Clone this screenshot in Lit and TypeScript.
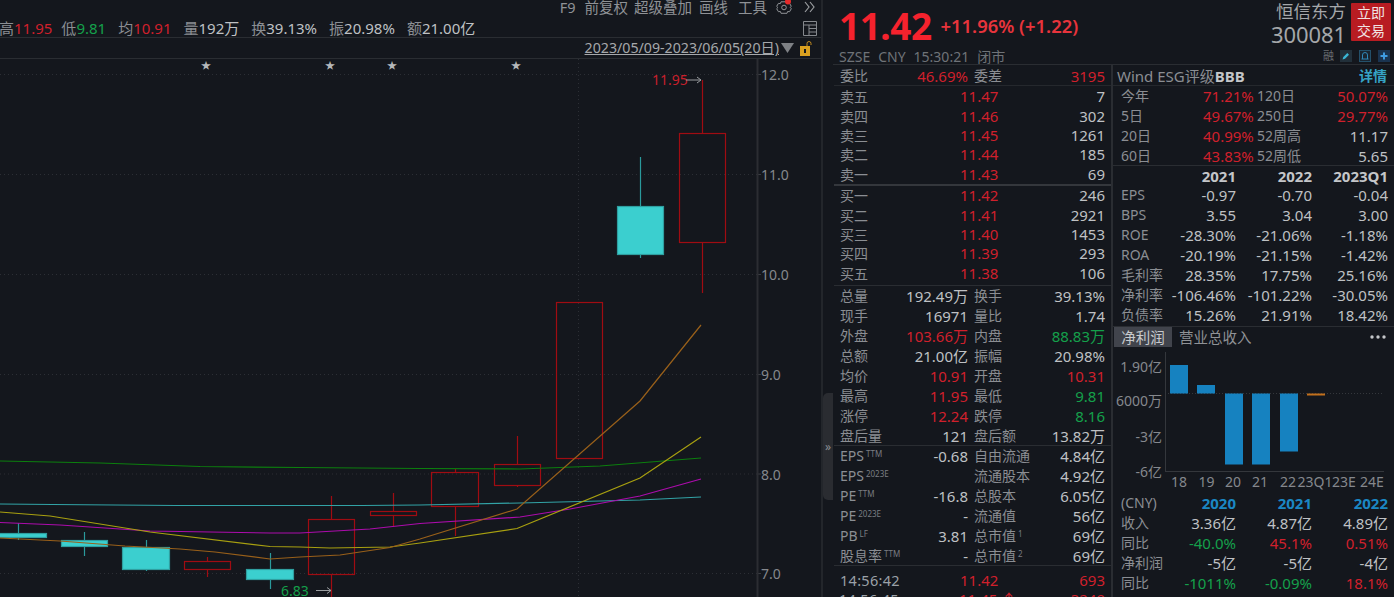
import { LitElement, html, css, svg } from "lit";
import { customElement } from "lit/decorators.js";

type C = "w" | "r" | "g" | "b";
const cls = (c: C) => ({ w: "w", r: "r", g: "g", b: "b" }[c]);

const candles: [number, number, number, number, number, number, number][] = [
  // kind(0 teal,1 red), x0, x1, top, bottom, wickTop, wickBottom
  [0, -10, 46, 533, 537, 523, 540],
  [0, 61, 107, 540, 546, 532, 556],
  [0, 122, 169, 547, 569, 540, 571],
  [1, 184, 230, 561, 569, 557, 577],
  [0, 246, 293, 569, 579, 553, 589],
  [1, 308, 354, 519, 574, 496, 597],
  [1, 370, 416, 511, 515, 493, 527],
  [1, 431, 478, 472, 506, 469, 536],
  [1, 494, 540, 464, 485, 436, 487],
  [1, 556, 602, 302, 458, 302, 458],
  [0, 617, 663, 206, 254, 157, 258],
  [1, 679, 725, 133, 242, 80, 293],
];

const lines: [string, string][] = [
  ["#0c7f0e", "0,461 100,463 200,466.5 300,467.5 420,468.5 520,469 600,466 701,458"],
  ["#32a3a6", "0,504 53,504.5 176,505.5 362,505.5 420,505 520,503 640,500 701,497"],
  ["#ac0cac", "0,522.5 60,525 150,531 270,533 300,533 370,529 420,523.5 520,517 570,509 640,496 701,479"],
  ["#a8a010", "0,512 50,516 150,532 270,546.5 300,547 330,548 390,547 420,543 517,528.5 640,478 701,437"],
  ["#99601a", "0,538 60,541 125,546 180,549 215,552 270,559 300,557 340,555 390,547.5 420,539 517,509 640,401 701,325"],
];

const book: [string, string, string][] = [
  ["卖五", "11.47", "7"], ["卖四", "11.46", "302"], ["卖三", "11.45", "1261"], ["卖二", "11.44", "185"], ["卖一", "11.43", "69"],
];
const book2: [string, string, string][] = [
  ["买一", "11.42", "246"], ["买二", "11.41", "2921"], ["买三", "11.40", "1453"], ["买四", "11.39", "293"], ["买五", "11.38", "106"],
];
const stats: [string, string, C, string, string, C][] = [
  ["总量", "192.49万", "w", "换手", "39.13%", "w"],
  ["现手", "16971", "w", "量比", "1.74", "w"],
  ["外盘", "103.66万", "r", "内盘", "88.83万", "g"],
  ["总额", "21.00亿", "w", "振幅", "20.98%", "w"],
  ["均价", "10.91", "r", "开盘", "10.31", "r"],
  ["最高", "11.95", "r", "最低", "9.81", "g"],
  ["涨停", "12.24", "r", "跌停", "8.16", "g"],
  ["盘后量", "121", "w", "盘后额", "13.82万", "w"],
];
const funda: [string, string, string, string, string, string][] = [
  ["EPS", "TTM", "-0.68", "自由流通", "", "4.84亿"],
  ["EPS", "2023E", "", "流通股本", "", "4.92亿"],
  ["PE", "TTM", "-16.8", "总股本", "", "6.05亿"],
  ["PE", "2023E", "-", "流通值", "", "56亿"],
  ["PB", "LF", "3.81", "总市值", "1", "69亿"],
  ["股息率", "TTM", "-", "总市值", "2", "69亿"],
];
const perf: [string, string, string, string][] = [
  ["今年", "71.21%", "120日", "50.07%"],
  ["5日", "49.67%", "250日", "29.77%"],
  ["20日", "40.99%", "52周高", "11.17"],
  ["60日", "43.83%", "52周低", "5.65"],
];
const fin: string[][] = [
  ["EPS", "-0.97", "-0.70", "-0.04"],
  ["BPS", "3.55", "3.04", "3.00"],
  ["ROE", "-28.30%", "-21.06%", "-1.18%"],
  ["ROA", "-20.19%", "-21.15%", "-1.42%"],
  ["毛利率", "28.35%", "17.75%", "25.16%"],
  ["净利率", "-106.46%", "-101.22%", "-30.05%"],
  ["负债率", "15.26%", "21.91%", "18.42%"],
];
const rev: [string, [string, C], [string, C], [string, C]][] = [
  ["收入", ["3.36亿", "w"], ["4.87亿", "w"], ["4.89亿", "w"]],
  ["同比", ["-40.0%", "g"], ["45.1%", "r"], ["0.51%", "r"]],
  ["净利润", ["-5亿", "w"], ["-5亿", "w"], ["-4亿", "w"]],
  ["同比", ["-1011%", "g"], ["-0.09%", "g"], ["18.1%", "r"]],
];
const info: [string, string, string][] = [
  ["高", "11.95", "r"], ["低", "9.81", "g"], ["均", "10.91", "r"], ["量", "192万", "w"],
  ["换", "39.13%", "w"], ["振", "20.98%", "w"], ["额", "21.00亿", "w"],
];

@customElement("app-root")
export class AppRoot extends LitElement {
  static styles = css`
    :host { display: block; width: 1394px; height: 597px; overflow: hidden; background: #14171d; color: #8b8e93;
      font-family: "Noto Sans", "Noto Sans CJK SC", sans-serif; font-size: 14px; line-height: 20px; }
    * { box-sizing: border-box; }
    .page { display: grid; grid-template-columns: 821px 12px 1fr; height: 597px; }
    .left { display: flex; flex-direction: column; height: 597px; overflow: hidden; }
    .toolbar { height: 19px; display: flex; justify-content: flex-end; align-items: flex-start; color: #8f9296; font-size: 14.5px; line-height: 15px; }
    .tool { height: 15px; line-height: 15px; white-space: nowrap; }
    .t9 { padding-left: 9px; } .t6 { padding-left: 6px; } .t7 { padding-left: 7px; } .t10 { padding-left: 10px; }
    .tool.ic { height: 19px; display: flex; align-items: flex-start; }
    .inforow { height: 19px; display: flex; align-items: center; border-bottom: 1px solid #2a2d32; font-size: 15px; line-height: 18px; }
    .info { white-space: nowrap; color: #8b8e93; margin-right: 12px; }
    .info:first-child { margin-left: -1px; margin-right: 9px; }
    .layout { margin-left: auto; margin-right: 4px; display: block; }
    .daterow { height: 21px; display: flex; justify-content: flex-end; align-items: center; border-bottom: 1px solid #2a2d32; padding-right: 9px; line-height: 20px; }
    .date { color: #a6a8ab; text-decoration: underline; margin-right: 2px; font-size: 14.2px; white-space: nowrap; }
    .chart { display: block; flex: none; }
    .chart text { font-family: "Noto Sans", "Noto Sans CJK SC", sans-serif; font-size: 14px; }
    .splitter { border-left: 2px solid #23262b; position: relative; }
    .handle { position: absolute; left: 0; top: 393px; width: 10px; height: 107px; background: #2a2c31; border-radius: 5px 0 0 5px; color: #8b8e93; font-size: 12px;
      display: flex; align-items: center; justify-content: center; }
    .right { display: flex; flex-direction: column; height: 597px; overflow: hidden; }
    .head { height: 49px; display: flex; align-items: flex-start; padding: 0 3px 0 6px; }
    .price { font-size: 37px; line-height: 49px; margin-top: 1px; height: 48px; font-weight: 700; color: #f5222d; letter-spacing: -0.5px; }
    .chg { font-size: 18.4px; line-height: 49px; height: 48px; margin-top: 1px; font-weight: 600; color: #e8343c; margin-left: 9px; white-space: nowrap; }
    .ident { margin-left: auto; text-align: right; color: #a5a7aa; margin-right: 5px; }
    .name { font-size: 17.5px; line-height: 22px; }
    .code { font-size: 22px; line-height: 25px; letter-spacing: -0.1px; }
    .trade { width: 40px; height: 38px; margin-top: 3px; background: #b81c22; color: #f0e3e3; font-size: 14px; line-height: 18px; text-align: center; padding-top: 1px; border-radius: 1px; }
    .sub { height: 16px; display: flex; align-items: center; padding: 0 4px 0 6px; color: #6f7378; font-size: 14px; line-height: 15px; border-bottom: 1px solid #2a2d32; white-space: nowrap; }
    .sub span { margin-right: 8px; }
    .subicons { margin-left: auto; display: flex; align-items: center; gap: 7px; margin-top: -1px; }
    .subicons span { margin: 0 -1px 0 0; font-size: 11px; line-height: 12px; color: #6a6e73; }
    .subicons svg { display: block; }
    .cols { display: grid; grid-template-columns: 280px 1fr; flex: 1; min-height: 0; }
    .colA { border-right: 2px solid #2a2d32; overflow: hidden; }
    .colB { overflow: hidden; }
    .r2 { display: grid; grid-template-columns: 128px 131px; column-gap: 6px; height: 20px; padding-left: 6px; align-items: center; white-space: nowrap; }
    .v { text-align: right; }
    .lbl2 { display: flex; justify-content: space-between; }
    .bookrow { display: grid; grid-template-columns: 120px 1fr auto; height: 19.4px; padding: 0 6px 0 6px; align-items: center; line-height: 19px; }
    .w { color: #bfc1c4; font-size: 15px; } .r { color: #d0202c; font-size: 15px; } .g { color: #14a04b; font-size: 15px; } .b { color: #1b87c4; font-size: 15px; }
    .weibi { height: 21px; border-bottom: 1px solid #25282d; margin-left: 1px; padding-top: 2px; line-height: 18px; }
    .book { padding: 1px 0 0; }
    .book1 { height: 98px; margin-left: 1px; }
    .book2 { height: 101px; margin-left: 1px; border-top: 2px solid #34373c; }
    .stats { border-top: 1px solid #2a2d32; height: 160px; margin-left: 1px; }
    .funda { border-top: 1px solid #2a2d32; margin-left: 1px; height: 120px; }
    .sup { font-size: 8px; margin-left: 2px; vertical-align: 4px; line-height: 0; color: #7a7d82; }
    .tick { border-top: 1px solid #2a2d32; margin-left: 1px; display: grid; grid-template-columns: 120px 1fr auto; padding: 4px 6px 0 6px; line-height: 20px; }
    .t { color: #9ba1a8; font-size: 14.5px; letter-spacing: .3px; }
    .esg { height: 21px; display: flex; padding: 2px 7px 0 4px; align-items: center; white-space: nowrap; border-bottom: 1px solid #25282d; font-size: 15px; line-height: 18px; }
    .esg b { color: #c4c6c9; }
    .esg .more { margin-left: auto; color: #36a3c6; font-weight: 600; font-size: 14px; }
    .perf { height: 79px; }
    .pr { display: grid; grid-template-columns: 82px 48px 1fr; padding: 0 6px 0 8px; height: 20px; align-items: center; white-space: nowrap; }
    .pr .lb { padding-left: 6px; }
    .fin { border-top: 1px solid #2a2d32; height: 161px; }
    .fr { display: grid; grid-template-columns: 42px 73px 76px 76px; height: 20px; padding: 0 6px 0 8px; align-items: center; white-space: nowrap; }
    .fr.h { font-weight: 700; color: #c4c6c9; height: 19px; font-size: 15px; line-height: 18px; }
    .tabs { border-top: 1px solid #2a2d32; height: 21px; display: flex; align-items: center; padding-right: 8px; }
    .tab { background: #41444c; color: #c8cacd; height: 20px; width: 58px; text-align: center; line-height: 20px; margin-left: 1px; font-size: 14.500px; }
    .tab2 { margin-left: 7px; color: #8f9296; font-size: 14.500px; }
    .dots { margin-left: auto; display: block; }
    .bars { display: block; }
    .bars text { font-family: "Noto Sans", "Noto Sans CJK SC", sans-serif; font-size: 14px; fill: #85888d; }
    .fh { font-weight: 700; }
  `;

  chart() {
    const ticks = [["12.0", 74.5], ["11.0", 174.5], ["10.0", 274.5], ["9.0", 374.5], ["8.0", 474], ["7.0", 573.5]] as [string, number][];
    return html`<svg class="chart" width="821" height="538" viewBox="0 59 821 538">
      ${ticks.map(([t, y]) => svg`
        <line x1="0" x2="757" y1=${y} y2=${y} stroke="#2c2f35" stroke-dasharray="1 3"></line>
        <line x1="757" x2="761" y1=${y} y2=${y} stroke="#3a3d42"></line>
        <text x="761" y=${y + 5.5} fill="#85888d">${t}</text>`)}
      <line x1="578.5" x2="578.5" y1="59" y2="597" stroke="#2c2f35" stroke-dasharray="1 3"></line>
      <line x1="757.5" x2="757.5" y1="59" y2="597" stroke="#2b2d32" stroke-width="2"></line>
      ${candles.map(([k, x0, x1, t, b, wt, wb]) => {
        const cx = Math.round((x0 + x1) / 2) + 0.5;
        const col = k ? "#a00c12" : "#2a9a9c";
        return svg`
          ${wt < t ? svg`<line x1=${cx} x2=${cx} y1=${wt} y2=${t} stroke=${col} stroke-width="1.2"></line>` : ""}
          ${wb > b ? svg`<line x1=${cx} x2=${cx} y1=${b} y2=${wb} stroke=${col} stroke-width="1.2"></line>` : ""}
          <rect x=${x0 + 0.5} y=${t + 0.5} width=${x1 - x0} height=${b - t} fill=${k ? "none" : "#3bcfcf"} stroke=${k ? "#a00c12" : "#2f9fa0"} stroke-width="1.2"></rect>`;
      })}
      ${lines.map(([c, p]) => svg`<polyline points=${p} fill="none" stroke=${c} stroke-width="1.2"></polyline>`)}
      ${[206, 330, 392, 516].map((x) => svg`<text x=${x} y="69" text-anchor="middle" fill="#b5b7ba" style="font-size:10px">★</text>`)}
      <text x="652" y="85" fill="#c8202c">11.95</text>
      <path d="M686 80H701M697 77L701 80L697 83" fill="none" stroke="#9a9da0"></path>
      <text x="281" y="596" fill="#14a04b">6.83</text>
      <path d="M316 590.500H331M327 587.500L331 590.500L327 593.500" fill="none" stroke="#9a9da0"></path>
    </svg>`;
  }

  barChart() {
    const bars = [[1170, 365, 28.5], [1197, 385, 8.5], [1225, 393.5, 71], [1252, 393.5, 71], [1280, 393.5, 58]];
    const xl: [string, number][] = [["18", 1179], ["19", 1206.5], ["20", 1233], ["21", 1260], ["22", 1288], ["23Q1", 1315], ["23E", 1344], ["24E", 1372]];
    const yl: [string, number][] = [["1.90亿", 367], ["6000万", 401], ["-3亿", 437], ["-6亿", 472]];
    return html`<svg class="bars" width="281" height="146" viewBox="1113 347 281 146">
      <line x1="1165.5" x2="1165.5" y1="352" y2="472" stroke="#34373c"></line>
      <line x1="1165" x2="1384" y1="471.5" y2="471.5" stroke="#34373c"></line>
      <line x1="1165" x2="1384" y1="393.5" y2="393.5" stroke="#34373c" stroke-dasharray="1 2"></line>
      ${bars.map(([x, y, h]) => svg`<rect x=${x} y=${y} width="18" height=${h} fill="#1682c0"></rect>`)}
      <rect x="1307" y="393.5" width="18" height="2" fill="#c2701c"></rect>
      ${yl.map(([t, y]) => svg`<text x="1162" y=${y + 5} text-anchor="end">${t}</text>`)}
      ${xl.map(([t, x]) => svg`<text x=${x} y="487" text-anchor="middle">${t}</text>`)}
    </svg>`;
  }

  render() {
    return html`<div class="page">
      <div class="left">
        <div class="toolbar">
          <div class="tool">F9</div><div class="tool t9">前复权</div><div class="tool t6">超级叠加</div><div class="tool t7">画线</div><div class="tool t10">工具</div>
          <div class="tool ic"><svg width="33" height="19" viewBox="-2.500 0 33 19"><circle cx="14.500" cy="7.500" r="2.300" fill="none" stroke="#8f9296"></circle><path d="M11.500 1.800h6l.6 1.800 2-.2 1.700 3-1.200 1.100 1.200 1.200-1.700 3-2-.2-.6 1.800h-6l-.6-1.800-2 .2-1.700-3 1.200-1.200-1.200-1.100 1.700-3 2 .2z" fill="none" stroke="#8f9296"></path><circle cx="18.500" cy="1.500" r="3" fill="#e52a2a"></circle></svg></div>
          <div class="tool ic"><svg width="21" height="19" viewBox="0 0 21 19"><path d="M5 2l4 5-4 5M10 2l4 5-4 5" fill="none" stroke="#9a9da0" stroke-width="1.200"></path></svg></div>
        </div>
        <div class="inforow">
          ${info.map(([l, v, c]) => html`<span class="info">${l}<span class=${c}>${v}</span></span>`)}
          <svg class="layout" width="14" height="15" viewBox="0 0 14 15"><path d="M.5 .5h13v14H.5zM.5 4h13M6 4v10.500M6 7.500h7.500M6 11h7.500" fill="none" stroke="#85888d"></path></svg>
        </div>
        <div class="daterow">
          <span class="date">2023/05/09-2023/06/05(20日)</span>
          <svg width="14" height="12" viewBox="0 0 14 12" style="margin-right:5px"><path d="M0 1h13L6.500 11z" fill="#7e8185"></path></svg>
          <svg width="12" height="17" viewBox="0 0 12 17"><path d="M7 6V3.500a2 2 0 0 1 4 0V5" fill="none" stroke="#c08a20"></path><rect x="0" y="6" width="10" height="10" fill="#d9a020"></rect><rect x="4" y="9" width="2" height="4" fill="#14171d"></rect></svg>
        </div>
        ${this.chart()}
      </div>
      <div class="splitter"><div class="handle">»</div></div>
      <div class="right">
        <div class="head">
          <div class="price">11.42</div>
          <div class="chg">+11.96% (+1.22)</div>
          <div class="ident"><div class="name">恒信东方</div><div class="code">300081</div></div>
          <div class="trade">立即<br />交易</div>
        </div>
        <div class="sub">
          <span>SZSE</span><span>CNY</span><span>15:30:21</span><span>闭市</span>
          <div class="subicons">
            <span>融</span>
            <svg width="12" height="12" viewBox="0 0 12 12"><rect width="12" height="12" fill="#22303a"></rect><path d="M2.500 9.500l.8-2.500 4-4 1.700 1.700-4 4z" fill="#3ab6d6"></path></svg>
            <svg width="12" height="12" viewBox="0 0 12 12"><rect x=".5" y=".5" width="11" height="11" fill="#1a2530" stroke="#24506a"></rect><path d="M2.500 9h7M3.500 9V5a2.500 2.500 0 0 1 5 0v4" fill="none" stroke="#2f87b8"></path></svg>
            <svg width="12" height="12" viewBox="0 0 12 12"><rect width="12" height="12" fill="#1a3450"></rect><path d="M6 2.500v7M2.500 6h7" stroke="#3f9be0" stroke-width="2"></path></svg>
          </div>
        </div>
        <div class="cols">
          <div class="colA">
            <div class="r2 weibi"><span class="lbl2"><span>委比</span><span class="r">46.69%</span></span><span class="lbl2"><span>委差</span><span class="r">3195</span></span></div>
            <div class="book book1">${book.map(([a, b, c]) => html`<div class="bookrow"><span>${a}</span><span class="r">${b}</span><span class="w">${c}</span></div>`)}</div>
            <div class="book2">${book2.map(([a, b, c]) => html`<div class="bookrow"><span>${a}</span><span class="r">${b}</span><span class="w">${c}</span></div>`)}</div>
            <div class="stats">${stats.map(([a, b, c, d, e, f]) => html`<div class="r2"><span class="lbl2"><span>${a}</span><span class=${cls(c)}>${b}</span></span><span class="lbl2"><span>${d}</span><span class=${cls(f)}>${e}</span></span></div>`)}</div>
            <div class="funda">${funda.map(([a, s, b, d, s2, e]) => html`<div class="r2"><span class="lbl2"><span>${a}<span class="sup">${s}</span></span><span class="w">${b}</span></span><span class="lbl2"><span>${d}${s2 ? html`<span class="sup">${s2}</span>` : ""}</span><span class="w">${e}</span></span></div>`)}</div>
            <div class="tick"><span class="t">14:56:42</span><span class="r">11.42</span><span class="r">693</span></div>
            <div class="bookrow"><span class="t">14:56:45</span><span class="r">11.45 ↑</span><span class="r">3249</span></div>
          </div>
          <div class="colB">
            <div class="esg"><span>Wind ESG评级</span><b>BBB</b><span class="more">详情</span></div>
            <div class="perf">${perf.map(([a, b, c, d]) => html`<div class="pr"><span>${a}</span><span class="r v">${b}</span><span class="lbl2"><span class="lb">${c}</span><span class=${d.includes("%") ? "r" : "w"}>${d}</span></span></div>`)}</div>
            <div class="fin">
              <div class="fr h"><span></span><span class="v">2021</span><span class="v">2022</span><span class="v">2023Q1</span></div>
              ${fin.map((r) => html`<div class="fr"><span>${r[0]}</span><span class="v w">${r[1]}</span><span class="v w">${r[2]}</span><span class="v w">${r[3]}</span></div>`)}
            </div>
            <div class="tabs"><div class="tab">净利润</div><div class="tab2">营业总收入</div>
              <svg class="dots" width="16" height="4" viewBox="0 0 16 4"><circle cx="2" cy="2" r="1.700" fill="#c4c6c9"></circle><circle cx="8" cy="2" r="1.700" fill="#c4c6c9"></circle><circle cx="14" cy="2" r="1.700" fill="#c4c6c9"></circle></svg></div>
            ${this.barChart()}
            <div>
              <div class="fr fh"><span style="font-weight:400">(CNY)</span><span class="v b">2020</span><span class="v b">2021</span><span class="v b">2022</span></div>
              ${rev.map(([l, a, b, c]) => html`<div class="fr"><span>${l}</span><span class="v ${a[1]}">${a[0]}</span><span class="v ${b[1]}">${b[0]}</span><span class="v ${c[1]}">${c[0]}</span></div>`)}
            </div>
          </div>
        </div>
      </div>
    </div>`;
  }
}
